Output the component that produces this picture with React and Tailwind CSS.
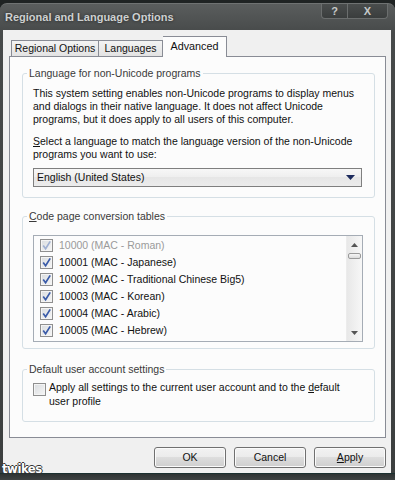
import React from "react";

const rows = [
  { label: "10000 (MAC - Roman)", disabled: true },
  { label: "10001 (MAC - Japanese)" },
  { label: "10002 (MAC - Traditional Chinese Big5)" },
  { label: "10003 (MAC - Korean)" },
  { label: "10004 (MAC - Arabic)" },
  { label: "10005 (MAC - Hebrew)" },
];

function Check({ checked, disabled }) {
  return (
    <span className="w-[13px] h-[13px] shrink-0 border border-[#8f8f8f] bg-[linear-gradient(135deg,#d9dcdf,#f6f6f6)] shadow-[inset_0_0_0_1px_#f4f4f4] flex items-center justify-center">
      {checked && (
        <svg width="11" height="11" viewBox="0 0 11 11">
          <path
            d="M2.2 5.6 L4.6 8.8 L9.2 1.4"
            fill="none"
            stroke={disabled ? "#9fb0d2" : "#3a5ba8"}
            strokeWidth="1.7"
          />
        </svg>
      )}
    </span>
  );
}

// fieldset has no padding, so the legend sits right after the border
function Group({ legend, children, className = "", inner = "" }) {
  return (
    <fieldset className={`border border-[#d5dfe5] rounded-[3px] ${className}`}>
      <legend className="ml-[4px] px-[2px] leading-[13px] text-[#3a3a3a]">{legend}</legend>
      <div className={inner}>{children}</div>
    </fieldset>
  );
}

function Button({ children }) {
  return (
    <button className="w-[72px] h-[21px] rounded-[3px] border border-[#707070] bg-[linear-gradient(#f2f2f2,#ebebeb_50%,#dddddd_50%,#cfcfcf)] shadow-[inset_0_0_0_1px_#fbfbfb] text-[#111] leading-none">
      {children}
    </button>
  );
}

export default function App() {
  return (
    <div className="w-[395px] h-[480px] bg-[#1f2323] overflow-hidden relative font-['Liberation_Sans',Arial,sans-serif] text-[10.5px] text-[#111]">
      <div className="mt-[3px] h-[477px] rounded-t-[7px] bg-[linear-gradient(#5a5d5d,#474a4a_6%,#3c3f3f)] border-t border-[#6f7272] flex flex-col">
        {/* title bar */}
        <div className="h-[26px] flex items-start justify-between pl-[5px] pr-[7px]">
          <span className="self-center text-[11px] font-bold text-[#cdd0d0] [text-shadow:0_0_3px_#222]">
            Regional and Language Options
          </span>
          <div className="flex h-[15px] rounded-b-[4px] border border-t-0 border-[#6b6e6e] bg-[linear-gradient(#4a4d4d,#3a3d3d)] text-[11px] font-bold text-[#c6c9c9]">
            <span className="w-[26px] flex items-center justify-center border-r border-[#6b6e6e]">?</span>
            <span className="w-[39px] flex items-center justify-center">X</span>
          </div>
        </div>

        {/* client area */}
        <div className="ml-[3px] mr-[4px] h-[443px] bg-[#f0f0f0] flex flex-col pt-[6px]">
          {/* tabs */}
          <div className="flex items-end pl-[8px] h-[20px]">
            <div className="w-[88px] h-[16px] border border-[#898c95] border-b-0 bg-[linear-gradient(#f3f3f3,#e3e3e3)] flex items-center justify-center">
              Regional Options
            </div>
            <div className="w-[64px] h-[16px] border border-l-0 border-[#898c95] border-b-0 bg-[linear-gradient(#f3f3f3,#e3e3e3)] flex items-center justify-center">
              Languages
            </div>
            <div className="w-[64px] h-[21px] -mb-px relative z-10 border border-l-0 border-[#898c95] border-b-0 bg-[#fcfcfc] flex items-center justify-center pb-[2px] text-[10.8px]">
              Advanced
            </div>
          </div>

          {/* tab panel */}
          <div className="ml-[6px] mr-[5px] h-[382px] border border-[#898c95] bg-[#fcfcfc] pl-[12px] pr-[10px] pt-[10px]">
            <Group legend="Language for non-Unicode programs" inner="pl-[10px] pr-[12px] pb-[10px]">
              <p className="pt-[7px] leading-[13px] whitespace-nowrap">
                This system setting enables non-Unicode programs to display menus
                <br />
                and dialogs in their native language. It does not affect Unicode
                <br />
                programs, but it does apply to all users of this computer.
              </p>
              <p className="mt-[9px] leading-[13px] whitespace-nowrap">
                <span className="underline">S</span>elect a language to match the language version of the non-Unicode
                <br />
                programs you want to use:
              </p>
              <div className="mt-[7px] h-[19px] border border-[#7f7f7f] bg-[linear-gradient(#f7f7f7,#eeeeee_50%,#e6e6e6_50%,#ececec)] flex items-center justify-between pl-[3px] pr-[6px]">
                <span>English (United States)</span>
                <svg width="9" height="5" viewBox="0 0 9 5">
                  <path d="M0 0 H9 L4.5 5 Z" fill="#1c2a5c" />
                </svg>
              </div>
            </Group>

            <Group
              legend={
                <>
                  <span className="underline">C</span>ode page conversion tables
                </>
              }
              className="mt-[12px]"
              inner="pl-[10px] pr-[11px] pb-[6px]"
            >
              <div className="mt-[12px] h-[107px] border border-[#a5acb5] bg-[#fcfcfc] flex">
                <div className="flex-1 pt-[1px] pl-[6px]">
                  {rows.map((r) => (
                    <div key={r.label} className="h-[17px] flex items-center gap-[6px]">
                      <Check checked disabled={r.disabled} />
                      <span className={r.disabled ? "text-[#9a9a9a]" : ""}>{r.label}</span>
                    </div>
                  ))}
                </div>
                <div className="w-[16px] bg-[linear-gradient(90deg,#e8e8e8,#f7f7f7)] border-l border-[#ececec] flex flex-col">
                  <div className="h-[17px] flex items-center justify-center">
                    <svg width="7" height="4" viewBox="0 0 7 4">
                      <path d="M3.5 0 L7 4 H0 Z" fill="#555" />
                    </svg>
                  </div>
                  <div className="h-[6px] mx-[1px] rounded-[2px] border border-[#9a9a9a] bg-[linear-gradient(#f6f6f6,#dcdcdc)]" />
                  <div className="flex-1" />
                  <div className="h-[17px] flex items-center justify-center">
                    <svg width="7" height="4" viewBox="0 0 7 4">
                      <path d="M0 0 H7 L3.5 4 Z" fill="#555" />
                    </svg>
                  </div>
                </div>
              </div>
            </Group>

            <Group legend="Default user account settings" className="mt-[14px]" inner="pl-[10px] pr-[12px] pb-[13px]">
              <div className="pt-[4px] flex items-start gap-[3px]">
                <span className="mt-[3px]">
                  <Check />
                </span>
                <span className="leading-[14px] whitespace-nowrap">
                  Apply all settings to the current user account and to the <span className="underline">d</span>efault
                  <br />
                  user profile
                </span>
              </div>
            </Group>
          </div>

          {/* buttons */}
          <div className="mt-[9px] flex justify-end gap-[8px] pr-[5px]">
            <Button>OK</Button>
            <Button>Cancel</Button>
            <Button>
              <span className="underline">A</span>pply
            </Button>
          </div>
        </div>

        <div className="flex-1 border-t border-[#1b3030] bg-[linear-gradient(#2e3333,#3e4242)]" />
      </div>

      <span className="absolute left-[2px] bottom-[5px] text-[13px] leading-none font-bold tracking-[-0.5px] text-white font-['DejaVu_Sans_Condensed','DejaVu_Sans',sans-serif] [text-shadow:1px_0_0_#333,-1px_0_0_#333,0_1px_0_#333,0_-1px_0_#333]">
        twikes
      </span>
    </div>
  );
}
